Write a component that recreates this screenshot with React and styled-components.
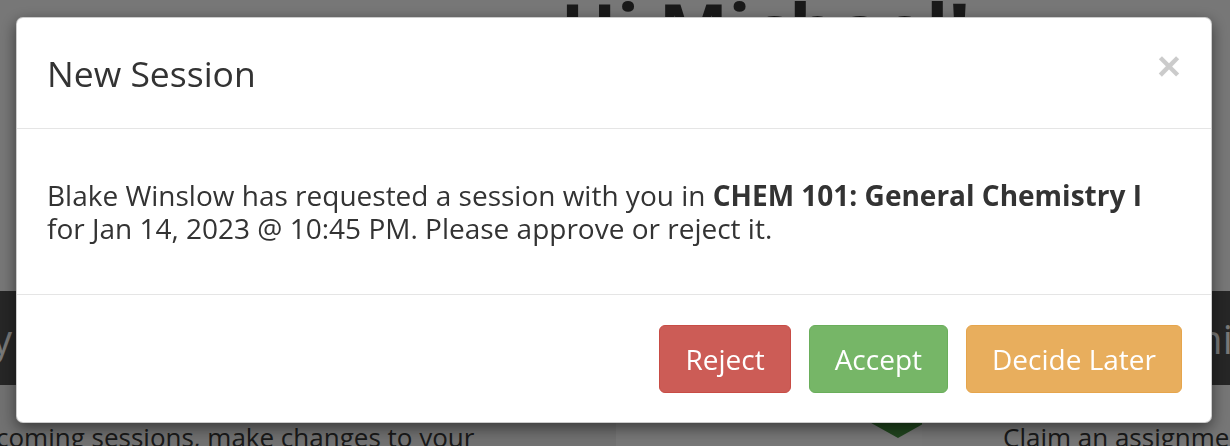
import React from 'react'
import styled, { createGlobalStyle } from 'styled-components'

const GlobalStyle = createGlobalStyle`
    html, body {
        margin: 0;
        padding: 0;
        height: 100%;
        overflow: hidden;
    }
    body {
        font-family: "Open Sans", "Liberation Sans", sans-serif;
        background: #eeeeee;
        color: #333333;
    }
    * {
        box-sizing: border-box;
    }
`

const Page = styled.div`
    width: 100%;
    height: 446px;
    overflow: hidden;
    display: flex;
    flex-direction: column;
`

const Hero = styled.div`
    flex-shrink: 0;
    height: 291px;
    padding-left: 300px;
    text-align: center;
    overflow: hidden;
`

const Greeting = styled.h1`
    margin: -8px 0 0 0;
    font-size: 74px;
    font-weight: 700;
    line-height: 1;
    color: #333333;
`

const TabBar = styled.div`
    flex-shrink: 0;
    height: 94px;
    background: #4d4d4d;
    display: flex;
    justify-content: space-between;
    align-items: center;
    overflow: hidden;
    white-space: nowrap;
`

const TabLabel = styled.span`
    font-size: 40px;
    color: #f0f0f0;
    margin-left: ${p => p.$shift || 0}px;
    margin-right: ${p => p.$trail || 0}px;
`

const InfoRow = styled.div`
    flex: 1;
    min-height: 0;
    display: grid;
    grid-template-columns: 616px 306px 1fr;
`

const InfoCol = styled.div`
    position: relative;
    background: ${p => p.$bg || '#eeeeee'};
    padding-top: 36px;
    overflow: hidden;
    white-space: nowrap;
`

const InfoText = styled.p`
    margin: 0 0 0 ${p => p.$indent || 0}px;
    font-size: 26px;
    line-height: 1.3;
    color: #333333;
`

const Arrow = styled.div`
    position: absolute;
    top: 0;
    left: 187px;
    width: 0;
    height: 0;
    border-left: 95px solid transparent;
    border-right: 95px solid transparent;
    border-top: 53px solid #418a3d;
`

const Backdrop = styled.div`
    position: fixed;
    inset: 0;
    background: rgba(0, 0, 0, 0.5);
`

const ModalWrap = styled.div`
    position: fixed;
    inset: 0;
    padding: 17px 18px 0 16px;
`

const Dialog = styled.div`
    background: #ffffff;
    border: 1px solid rgba(0, 0, 0, 0.2);
    border-radius: 7px;
    box-shadow: 0 5px 15px rgba(0, 0, 0, 0.5);
    display: flex;
    flex-direction: column;
`

const Header = styled.div`
    display: flex;
    justify-content: space-between;
    align-items: center;
    padding: 32px 30px 32px 30px;
    border-bottom: 1px solid #e5e5e5;
`

const Title = styled.h4`
    margin: 0;
    font-size: 35.5px;
    font-weight: 400;
    line-height: 46px;
    color: #333333;
`

const Close = styled.button`
    border: 0;
    background: transparent;
    padding: 0;
    font-family: "Liberation Sans", Arial, sans-serif;
    font-size: 41px;
    font-weight: 700;
    line-height: 1;
    color: #000000;
    opacity: 0.2;
    margin-top: -13px;
    cursor: pointer;
`

const Body = styled.div`
    padding: 50px 31px 50px 30px;
    font-size: 28px;
    line-height: 32.5px;
    color: #333333;
`

const Footer = styled.div`
    display: flex;
    justify-content: flex-end;
    gap: 18px;
    padding: 30px 29px 29px 30px;
    border-top: 1px solid #e5e5e5;
`

const colors = {
    danger: { bg: '#cc5c56', border: '#c84c45' },
    success: { bg: '#76b667', border: '#6aae5b' },
    warning: { bg: '#e8ae5d', border: '#e6a54c' },
}

const Button = styled.button`
    font-family: "Open Sans", "Liberation Sans", sans-serif;
    font-size: 28px;
    line-height: 32px;
    padding: 17px 25px;
    border-radius: 6px;
    color: #ffffff;
    background: ${p => colors[p.$kind].bg};
    border: 1px solid ${p => colors[p.$kind].border};
    cursor: pointer;
`

const App = () => {
  return (
    <>
        <GlobalStyle />
        <Page>
            <Hero>
                <Greeting>Hi Michael!</Greeting>
            </Hero>
            <TabBar>
                <TabLabel $shift={-44}>My Sessions</TabLabel>
                <TabLabel $trail={-49}>Teaching</TabLabel>
            </TabBar>
            <InfoRow>
                <InfoCol $bg="#e2e2e2">
                    <InfoText $indent={-4}>coming sessions, make changes to your</InfoText>
                </InfoCol>
                <InfoCol $bg="#efefef">
                    <Arrow />
                </InfoCol>
                <InfoCol $bg="#ececec">
                    <InfoText $indent={81}>Claim an assignment</InfoText>
                </InfoCol>
            </InfoRow>
        </Page>
        <Backdrop />
        <ModalWrap>
            <Dialog>
                <Header>
                    <Title>New Session</Title>
                    <Close aria-label="Close">×</Close>
                </Header>
                <Body>
                    Blake Winslow has requested a session with you in <strong>CHEM 101: General Chemistry I</strong> for Jan 14, 2023 @ 10:45 PM. Please approve or reject it.
                </Body>
                <Footer>
                    <Button $kind="danger">Reject</Button>
                    <Button $kind="success">Accept</Button>
                    <Button $kind="warning">Decide Later</Button>
                </Footer>
            </Dialog>
        </ModalWrap>
    </>
  )
}

export default App
